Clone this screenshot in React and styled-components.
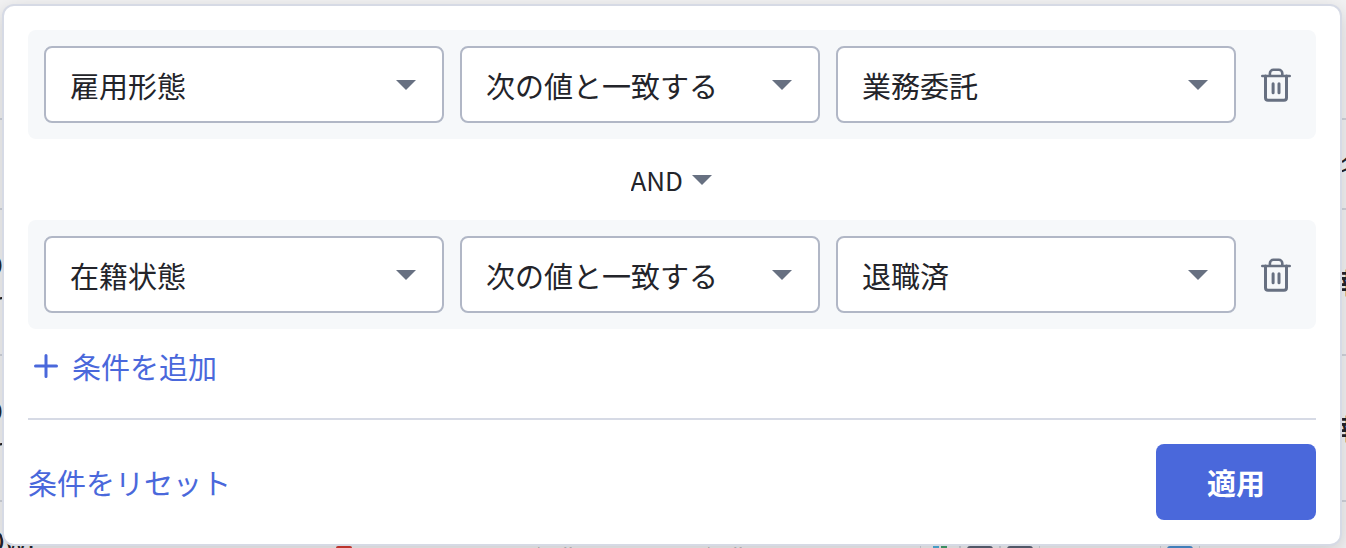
import React, { useId, useState } from 'react';
import styled, { createGlobalStyle } from 'styled-components';

const GlobalStyle = createGlobalStyle`
  * {
    box-sizing: border-box;
  }
  body {
    margin: 0;
    color: #23242a;
    background: #f2f2f3;
    font-family: "Noto Sans CJK JP", sans-serif;
    font-size: 29px;
    line-height: 44px;
  }
  button, select {
    font: inherit;
    color: inherit;
  }
`;

const Page = styled.div`
  position: relative;
  min-height: 100vh;
  padding: 4px 4px 2px 2px;
  overflow: hidden;
`;

// list that lies behind the filter panel
const List = styled.div`
  position: absolute;
  inset: 0;
  display: grid;
  grid-template-rows: 120px 90px 146px 146px 146px;
  overflow: hidden;
  font-size: 28px;
  line-height: 36px;
`;

const ListRow = styled.div`
  display: flex;
  justify-content: space-between;
  align-items: center;
  border-bottom: 2px solid #cfd2da;
`;

const ListCell = styled.div`
  width: 18px;
  margin-left: -15px;
  direction: rtl;
`;

const ListEndCell = styled.div`
  width: 6px;
  margin-left: auto;
  white-space: nowrap;
  font-weight: ${props => (props.$bold ? 700 : 400)};
`;

const LastRow = styled.div`
  display: grid;
  grid-template-columns: 320px 222px 170px 192px 240px 1fr;
  align-items: start;
  padding-top: 20px;
  margin-left: -16px;
`;

const LastCell = styled.div`
  padding-top: ${props => (props.$low ? '20px' : '0')};
`;

const Mark = styled.div`
  width: 16px;
  height: 16px;
  margin: 24px 0 0 32px;
  border-radius: 2px;
  background: #d33b32;
`;

const Tools = styled.div`
  display: flex;
  margin: 12px 0 0 32px;
`;

const Tool = styled.div`
  display: flex;
  justify-content: center;
  align-items: flex-start;
  width: 40px;
  height: 40px;
  padding-top: 11px;
  border: 1px solid #cfd2da;
  border-radius: 8px;
`;

const Panel = styled.form`
  position: relative;
  padding: 24px;
  border: 2px solid #d6dae5;
  border-radius: 12px;
  background: #fff;
  box-shadow: 0 6px 20px rgba(0, 0, 0, 0.16);
`;

const Condition = styled.div`
  display: grid;
  grid-template-columns: 400fr 360fr 400fr 48px;
  gap: 16px;
  align-items: center;
  padding: 16px;
  border-radius: 8px;
  background: #f6f8fa;
`;

const SelectBox = styled.div`
  display: grid;
  align-items: center;
  min-width: 0;

  > * {
    grid-area: 1 / 1;
  }
  > svg {
    justify-self: end;
    margin-right: 28px;
    pointer-events: none;
  }
`;

const Select = styled.select`
  width: 100%;
  height: 77px;
  padding: 0 56px 0 24px;
  border: 2px solid #b1b7c6;
  border-radius: 8px;
  background: #fff;
  appearance: none;
`;

const IconButton = styled.button`
  display: flex;
  justify-content: center;
  padding: 0;
  border: 0;
  background: none;
  cursor: pointer;
`;

const Joiner = styled.div`
  display: flex;
  justify-content: center;
  align-items: center;
  height: 81px;
  padding-right: 2px;
`;

const JoinerSelect = styled.select`
  padding: 0 28px 0 0;
  border: 0;
  background: none;
  font-size: 26px;
  appearance: none;
`;

const JoinerBox = styled(SelectBox)`
  > svg {
    margin-right: 0;
  }
`;

const TextButton = styled.button`
  display: flex;
  align-items: center;
  gap: 8px;
  padding: 0;
  border: 0;
  background: none;
  color: #4a68db;
  cursor: pointer;
`;

const AddArea = styled.div`
  padding: 15px 0 30px;
`;

const Footer = styled.div`
  display: flex;
  justify-content: space-between;
  align-items: center;
  padding-top: 24px;
  border-top: 2px solid #d6dae5;
`;

const ApplyButton = styled.button`
  width: 160px;
  height: 76px;
  border: 0;
  border-radius: 8px;
  background: #4a68db;
  color: #fff;
  font-weight: 700;
  cursor: pointer;
`;

const Caret = () => (
  <svg width="20" height="10" viewBox="0 0 20 10" aria-hidden="true">
    <path d="M0 0h20L10 10z" fill="#677081" />
  </svg>
);

const TrashIcon = () => (
  <svg width="32" height="37" viewBox="0 0 32 37" fill="none" stroke="#677081" strokeLinecap="round" strokeLinejoin="round" aria-hidden="true">
    <path d="M2.300 10h27.400M9.900 10V7.300A3.500 3.500 0 0 1 13.400 3.800h5.400a3.500 3.500 0 0 1 3.500 3.500V10" strokeWidth="2.600" />
    <path d="M5.500 10v21.700a2.500 2.500 0 0 0 2.500 2.500h16a2.500 2.500 0 0 0 2.500-2.500V10M13.100 17.800v9M19 17.800v9" strokeWidth="3" />
  </svg>
);

const PlusIcon = () => (
  <svg width="36" height="36" viewBox="0 0 36 36" stroke="#4a68db" strokeWidth="3" strokeLinecap="round" aria-hidden="true">
    <path d="M18 7.500v21M7.500 18h21" />
  </svg>
);

const ChartIcon = () => (
  <svg width="16" height="16" viewBox="0 0 16 16">
    <path d="M1 0h6v16H1z" fill="#4fb0dc" />
    <path d="M9 0h6v16H9z" fill="#43a06c" />
  </svg>
);

const BoxIcon = ({ color }) => (
  <svg width="26" height="20" viewBox="0 0 26 20">
    <rect width="26" height="20" rx="3" fill={color} />
  </svg>
);

const SelectField = ({ label, options }) => {
  const id = useId();
  return (
    <SelectBox>
      <Select id={id} aria-label={label}>
        {options.map(option => <option key={option}>{option}</option>)}
      </Select>
      <Caret />
    </SelectBox>
  );
};

const BackgroundList = () => (
  <List aria-hidden="true">
    <ListRow />
    <ListRow>
      <ListEndCell>名</ListEndCell>
    </ListRow>
    <ListRow>
      <ListCell>O<br />r</ListCell>
      <ListEndCell $bold>報</ListEndCell>
    </ListRow>
    <ListRow>
      <ListCell>O<br />r</ListCell>
      <ListEndCell $bold>報</ListEndCell>
    </ListRow>
    <LastRow>
      <LastCell>Owr</LastCell>
      <Mark />
      <LastCell $low>営業</LastCell>
      <LastCell $low>営業</LastCell>
      <Tools>
        <Tool><ChartIcon /></Tool>
        <Tool><BoxIcon color="#5c6374" /></Tool>
        <Tool><BoxIcon color="#5c6374" /></Tool>
      </Tools>
      <Tools>
        <Tool><BoxIcon color="#4a8fd0" /></Tool>
      </Tools>
    </LastRow>
  </List>
);

const initialConditions = [
  { id: 1, field: '雇用形態', value: '業務委託' },
  { id: 2, field: '在籍状態', value: '退職済' },
];

const App = () => {
  const [conditions, setConditions] = useState(initialConditions);
  const remove = id => setConditions(conditions.filter(item => item.id !== id));
  const add = () => setConditions([...conditions, { ...initialConditions[0], id: Date.now() }]);

  return (
    <Page>
      <GlobalStyle />
      <BackgroundList />
      <Panel onSubmit={event => event.preventDefault()}>
        {conditions.map((item, index) => (
          <React.Fragment key={item.id}>
            {index > 0 && (
              <Joiner>
                <JoinerBox>
                  <JoinerSelect aria-label="AND">
                    <option>AND</option>
                  </JoinerSelect>
                  <Caret />
                </JoinerBox>
              </Joiner>
            )}
            <Condition>
              <SelectField label={item.field} options={[item.field]} />
              <SelectField label="次の値と一致する" options={['次の値と一致する']} />
              <SelectField label={item.value} options={[item.value]} />
              <IconButton type="button" aria-label="削除" onClick={() => remove(item.id)}>
                <TrashIcon />
              </IconButton>
            </Condition>
          </React.Fragment>
        ))}
        <AddArea>
          <TextButton type="button" onClick={add}>
            <PlusIcon />
            条件を追加
          </TextButton>
        </AddArea>
        <Footer>
          <TextButton type="button" onClick={() => setConditions([])}>条件をリセット</TextButton>
          <ApplyButton type="submit">適用</ApplyButton>
        </Footer>
      </Panel>
    </Page>
  );
};

export default App;
